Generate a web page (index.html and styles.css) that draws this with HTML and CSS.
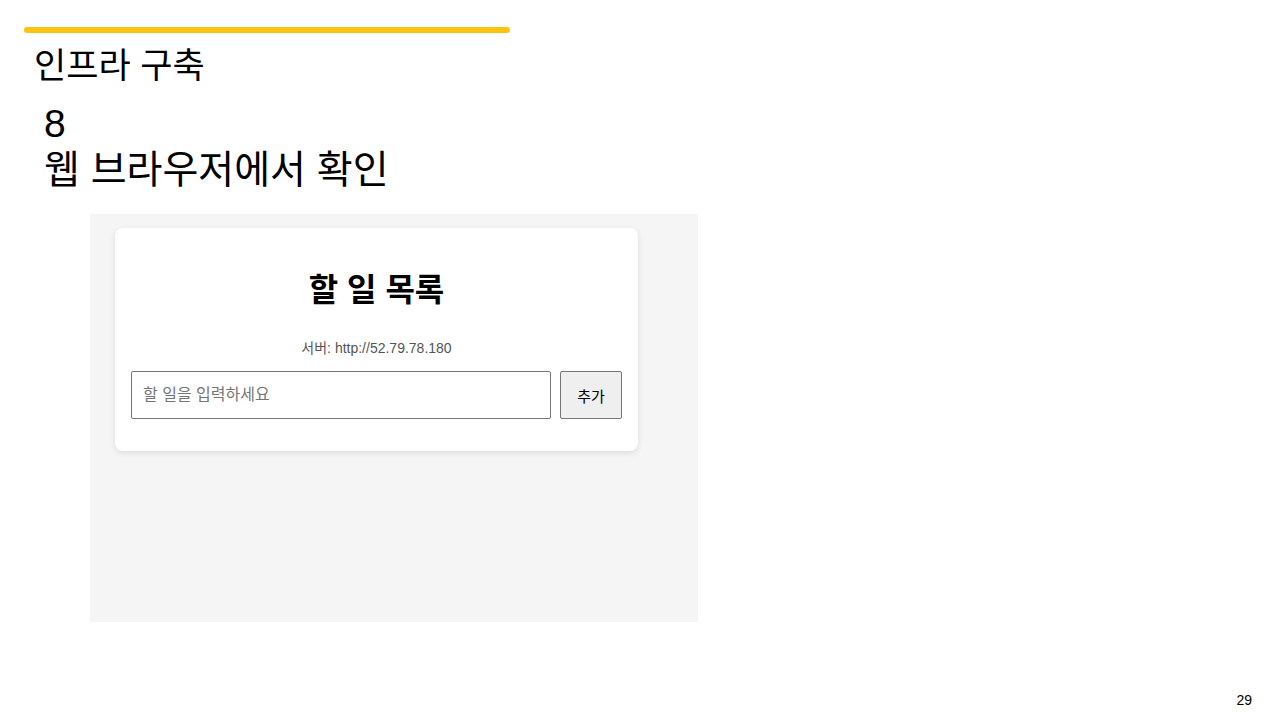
FILE: index.html
```html
<!DOCTYPE html>
<html lang="ko">
<head>
    <meta charset="UTF-8">
    <title>인프라 구축</title>
<link rel="stylesheet" href="styles.css">
</head>
<body>
<div class="slide">
    <div class="bar"></div>
    <h1 class="title">인프라 구축</h1>
    <div class="step">
        <p class="num">8</p>
        <p class="desc">웹 브라우저에서 확인</p>
    </div>
    <div class="shot">
        <div class="card">
            <h2 class="card_title">할 일 목록</h2>
            <p class="server">서버: http://52.79.78.180</p>
            <div class="form">
                <input class="todo" type="text" placeholder="할 일을 입력하세요">
                <button class="add">추가</button>
            </div>
        </div>
    </div>
    <div class="page">29</div>
</div>
</body>
</html>
```

FILE: styles.css
```css
body {
	margin: 0;
	background-color: #fff;
	font-family: "Liberation Sans", "Noto Sans CJK KR", sans-serif;
	color: #000;
}
.slide {
	position: relative;
	width: 1280px;
	height: 720px;
	padding-top: 27px;
	box-sizing: border-box;
}
.bar {
	margin-left: 24px;
	width: 486px;
	height: 6px;
	border-radius: 3px;
	background-color: #fdc311;
}
.title {
	margin: 10px 0 0 34px;
	font-size: 35px;
	font-weight: normal;
	line-height: 46px;
}
.step {
	margin-left: 44px;
	margin-top: 12px;
}
.step p {
	margin: 0;
	font-size: 39px;
	line-height: 46px;
}
.shot {
	margin: 21px 0 0 90px;
	width: 608px;
	height: 408px;
	background-color: #f5f5f5;
	padding: 14px 0 0 25px;
	box-sizing: border-box;
}
.card {
	width: 523px;
	background-color: #fff;
	border-radius: 8px;
	box-shadow: 0 2px 6px rgba(0, 0, 0, 0.1);
	padding: 40px 16px 32px;
	box-sizing: border-box;
	text-align: center;
}
.card_title {
	margin: 0;
	font-size: 32px;
	font-weight: bold;
	line-height: 44px;
}
.server {
	margin: 25px 0 14px;
	font-size: 14px;
	color: #555;
}
.form {
	display: flex;
	gap: 9px;
}
.todo {
	flex: 1;
	height: 48px;
	box-sizing: border-box;
	border: 1px solid #767676;
	border-radius: 2px;
	padding: 0 11px;
	font-family: "Liberation Sans", "Noto Sans CJK KR", sans-serif;
	font-size: 16px;
}
.todo::placeholder {
	color: #757575;
}
.add {
	width: 62px;
	height: 48px;
	border: 1px solid #767676;
	border-radius: 2px;
	background-color: #efefef;
	font-family: "Liberation Sans", "Noto Sans CJK KR", sans-serif;
	font-size: 15px;
	color: #000;
}
.page {
	position: absolute;
	right: 28px;
	bottom: 12px;
	font-size: 14px;
}
```
